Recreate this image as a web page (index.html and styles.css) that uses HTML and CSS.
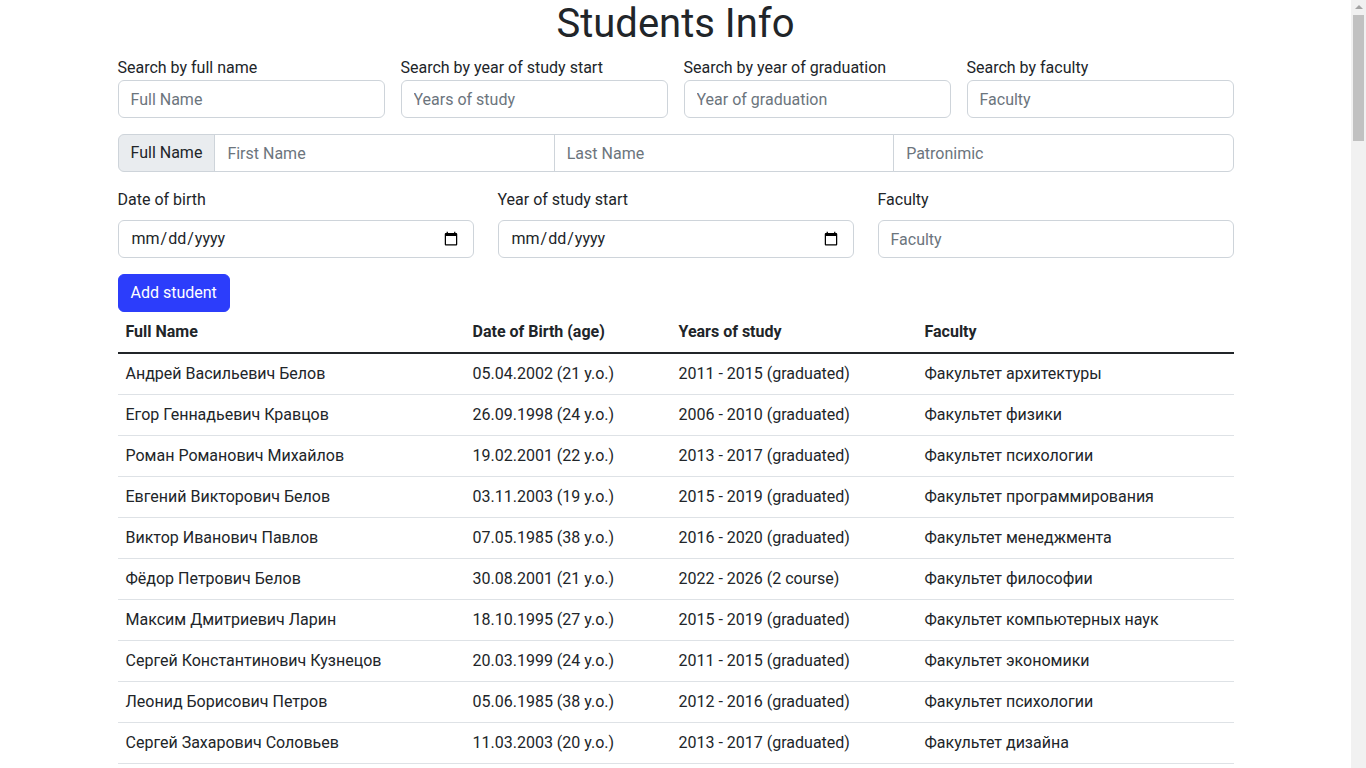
FILE: index.html
```html
<!DOCTYPE html>
<html lang="en">
<head>
<meta charset="utf-8">
<title>Students Info</title>
<link rel="stylesheet" href="styles.css">
</head>
<body>
<div class="container">
  <h1 class="title">Students Info</h1>
  <div class="search-row">
    <div class="field">
      <label class="search-label">Search by full name</label>
      <input class="form-control" type="text" placeholder="Full Name">
    </div>
    <div class="field">
      <label class="search-label">Search by year of study start</label>
      <input class="form-control" type="text" placeholder="Years of study">
    </div>
    <div class="field">
      <label class="search-label">Search by year of graduation</label>
      <input class="form-control" type="text" placeholder="Year of graduation">
    </div>
    <div class="field">
      <label class="search-label">Search by faculty</label>
      <input class="form-control" type="text" placeholder="Faculty">
    </div>
  </div>

  <div class="input-group">
    <span class="input-group-text">Full Name</span>
    <input class="form-control ig" type="text" placeholder="First Name">
    <input class="form-control ig" type="text" placeholder="Last Name">
    <input class="form-control ig last" type="text" placeholder="Patronimic">
  </div>

  <div class="add-row">
    <div class="field">
      <label class="form-label">Date of birth</label>
      <input class="form-control" type="date">
    </div>
    <div class="field">
      <label class="form-label">Year of study start</label>
      <input class="form-control" type="date">
    </div>
    <div class="field">
      <label class="form-label">Faculty</label>
      <input class="form-control" type="text" placeholder="Faculty">
    </div>
  </div>

  <button class="btn-primary" type="button">Add student</button>

  <table class="table">
    <thead>
      <tr>
        <th class="c1">Full Name</th>
        <th class="c2">Date of Birth (age)</th>
        <th class="c3">Years of study</th>
        <th>Faculty</th>
      </tr>
    </thead>
    <tbody>
      <tr><td>Андрей Васильевич Белов</td><td>05.04.2002 (21 y.o.)</td><td>2011 - 2015 (graduated)</td><td>Факультет архитектуры</td></tr>
      <tr><td>Егор Геннадьевич Кравцов</td><td>26.09.1998 (24 y.o.)</td><td>2006 - 2010 (graduated)</td><td>Факультет физики</td></tr>
      <tr><td>Роман Романович Михайлов</td><td>19.02.2001 (22 y.o.)</td><td>2013 - 2017 (graduated)</td><td>Факультет психологии</td></tr>
      <tr><td>Евгений Викторович Белов</td><td>03.11.2003 (19 y.o.)</td><td>2015 - 2019 (graduated)</td><td>Факультет программирования</td></tr>
      <tr><td>Виктор Иванович Павлов</td><td>07.05.1985 (38 y.o.)</td><td>2016 - 2020 (graduated)</td><td>Факультет менеджмента</td></tr>
      <tr><td>Фёдор Петрович Белов</td><td>30.08.2001 (21 y.o.)</td><td>2022 - 2026 (2 course)</td><td>Факультет философии</td></tr>
      <tr><td>Максим Дмитриевич Ларин</td><td>18.10.1995 (27 y.o.)</td><td>2015 - 2019 (graduated)</td><td>Факультет компьютерных наук</td></tr>
      <tr><td>Сергей Константинович Кузнецов</td><td>20.03.1999 (24 y.o.)</td><td>2011 - 2015 (graduated)</td><td>Факультет экономики</td></tr>
      <tr><td>Леонид Борисович Петров</td><td>05.06.1985 (38 y.o.)</td><td>2012 - 2016 (graduated)</td><td>Факультет психологии</td></tr>
      <tr><td>Сергей Захарович Соловьев</td><td>11.03.2003 (20 y.o.)</td><td>2013 - 2017 (graduated)</td><td>Факультет дизайна</td></tr>
    </tbody>
  </table>
</div>
<div class="scrollbar" aria-hidden="true">
  <div class="scroll-arrow"></div>
  <div class="scroll-thumb"></div>
</div>
</body>
</html>
```

FILE: styles.css
```css
* { box-sizing: border-box; }

html, body {
  margin: 0;
  padding: 0;
}

body {
  margin-right: 15px;
  font-family: Roboto, "Noto Sans", sans-serif;
  font-size: 16px;
  line-height: 1.5;
  color: #212529;
  background: #fff;
}

.container {
  max-width: 1140px;
  margin: 0 auto;
  padding: 0 12px;
}

.title {
  margin: 0 0 8px;
  font-size: 40px;
  font-weight: 400;
  line-height: 1.2;
  text-align: center;
}

.search-row {
  display: grid;
  grid-template-columns: repeat(4, 1fr);
  column-gap: 16px;
}

.add-row {
  display: grid;
  grid-template-columns: repeat(3, 1fr);
  column-gap: 24px;
  margin-top: 16px;
}

.field {
  display: flex;
  flex-direction: column;
}

.search-label {
  display: block;
}

.form-label {
  display: block;
  margin-bottom: 8px;
}

.form-control {
  display: block;
  width: 100%;
  height: 38px;
  padding: 6px 12px;
  font-family: inherit;
  font-size: 16px;
  line-height: 1.5;
  color: #212529;
  background: #fff;
  border: 1px solid #ced4da;
  border-radius: 6px;
}

.form-control::placeholder {
  color: #6c757d;
  opacity: 1;
}

.input-group {
  display: flex;
  margin-top: 16px;
}

.input-group-text {
  display: flex;
  align-items: center;
  padding: 6px 12px;
  background: #e9ecef;
  border: 1px solid #ced4da;
  border-radius: 6px 0 0 6px;
  white-space: nowrap;
}

.form-control.ig {
  flex: 1 1 0;
  min-width: 0;
  margin-left: -1px;
  border-radius: 0;
}

.form-control.ig.last {
  border-radius: 0 6px 6px 0;
}

.btn-primary {
  display: block;
  margin-top: 16px;
  height: 38px;
  padding: 6px 12px;
  font-family: inherit;
  font-size: 16px;
  line-height: 1.5;
  color: #fff;
  background: #2c3dfb;
  border: 1px solid #2c3dfb;
  border-radius: 6px;
}

.table {
  width: 100%;
  border-collapse: collapse;
  margin-bottom: 16px;
}

.table th,
.table td {
  padding: 8px;
  text-align: left;
  vertical-align: top;
  border-bottom: 1px solid #dee2e6;
}

.table th {
  font-weight: 700;
  border-bottom: 2px solid #212529;
}

.table .c1 { width: 347px; }
.table .c2 { width: 206px; }
.table .c3 { width: 246px; }

.scrollbar {
  position: fixed;
  top: 0;
  right: 0;
  width: 15px;
  height: 100vh;
  background: #f1f1f1;
  display: flex;
  flex-direction: column;
  align-items: center;
}

.scroll-arrow {
  margin-top: 5px;
  width: 0;
  height: 0;
  border-left: 4px solid transparent;
  border-right: 4px solid transparent;
  border-bottom: 4px solid #a3a3a3;
}

.scroll-thumb {
  margin-top: 6px;
  width: 11px;
  height: 126px;
  background: #c1c1c1;
}
```
